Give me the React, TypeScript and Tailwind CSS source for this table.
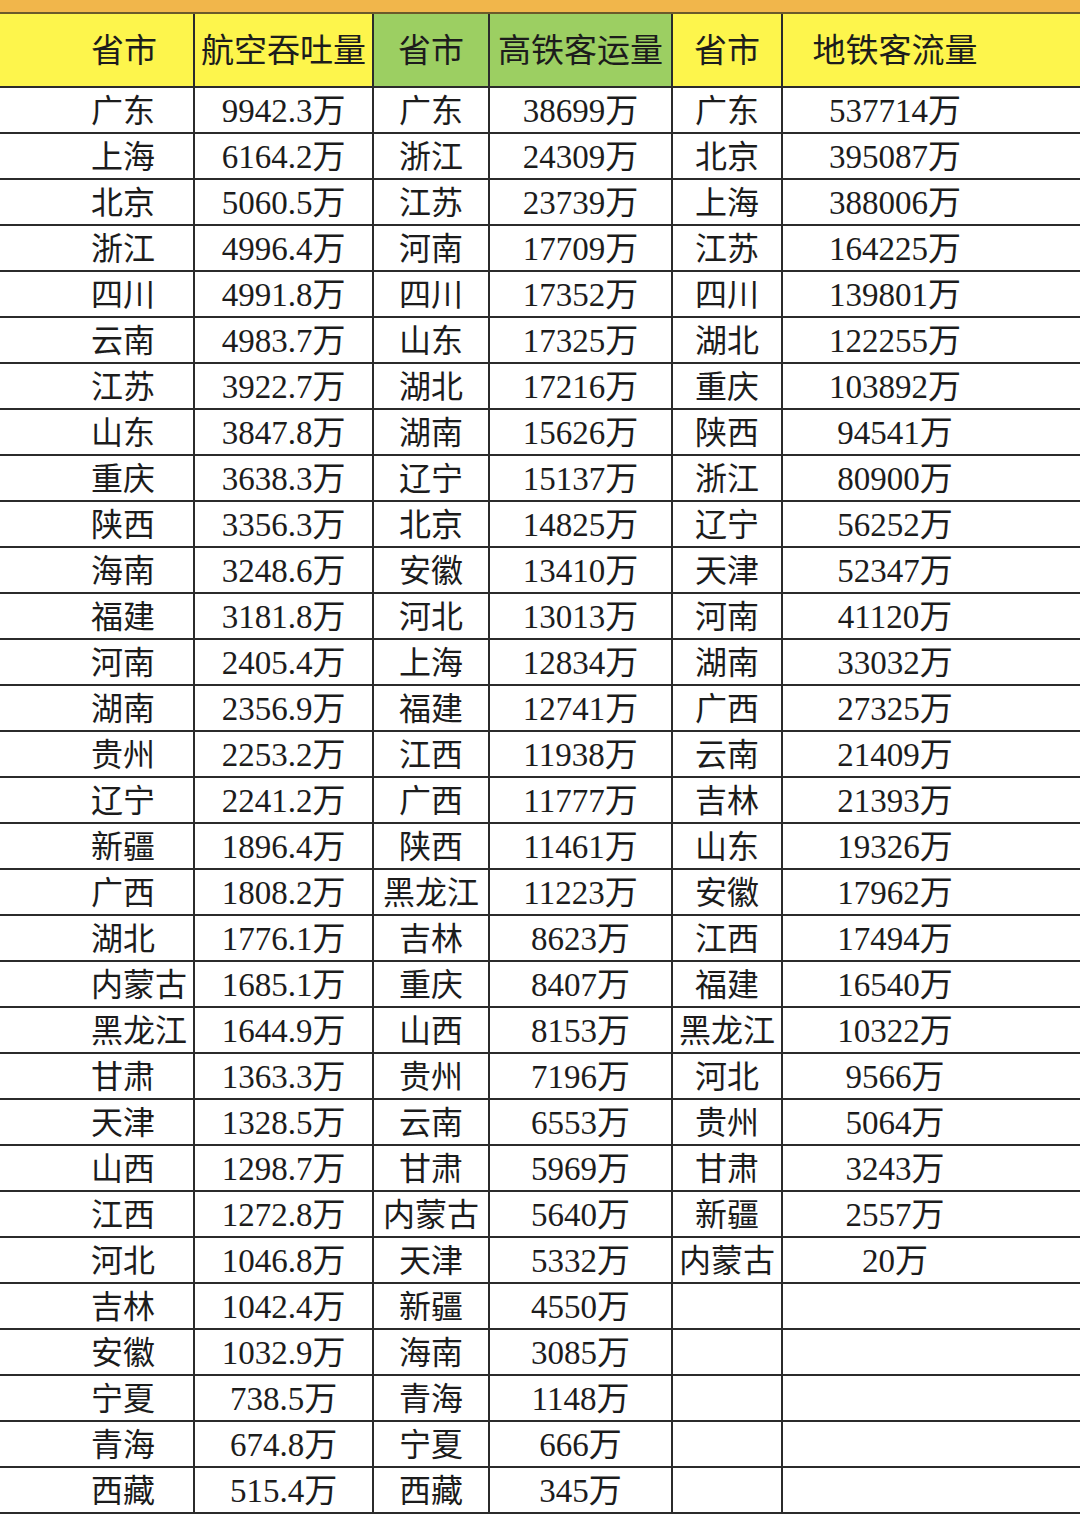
const AIR: [string, string][] = [
  ["广东", "9942.3"], ["上海", "6164.2"], ["北京", "5060.5"], ["浙江", "4996.4"],
  ["四川", "4991.8"], ["云南", "4983.7"], ["江苏", "3922.7"], ["山东", "3847.8"],
  ["重庆", "3638.3"], ["陕西", "3356.3"], ["海南", "3248.6"], ["福建", "3181.8"],
  ["河南", "2405.4"], ["湖南", "2356.9"], ["贵州", "2253.2"], ["辽宁", "2241.2"],
  ["新疆", "1896.4"], ["广西", "1808.2"], ["湖北", "1776.1"], ["内蒙古", "1685.1"],
  ["黑龙江", "1644.9"], ["甘肃", "1363.3"], ["天津", "1328.5"], ["山西", "1298.7"],
  ["江西", "1272.8"], ["河北", "1046.8"], ["吉林", "1042.4"], ["安徽", "1032.9"],
  ["宁夏", "738.5"], ["青海", "674.8"], ["西藏", "515.4"],
];

const RAIL: [string, string][] = [
  ["广东", "38699"], ["浙江", "24309"], ["江苏", "23739"], ["河南", "17709"],
  ["四川", "17352"], ["山东", "17325"], ["湖北", "17216"], ["湖南", "15626"],
  ["辽宁", "15137"], ["北京", "14825"], ["安徽", "13410"], ["河北", "13013"],
  ["上海", "12834"], ["福建", "12741"], ["江西", "11938"], ["广西", "11777"],
  ["陕西", "11461"], ["黑龙江", "11223"], ["吉林", "8623"], ["重庆", "8407"],
  ["山西", "8153"], ["贵州", "7196"], ["云南", "6553"], ["甘肃", "5969"],
  ["内蒙古", "5640"], ["天津", "5332"], ["新疆", "4550"], ["海南", "3085"],
  ["青海", "1148"], ["宁夏", "666"], ["西藏", "345"],
];

const METRO: [string, string][] = [
  ["广东", "537714"], ["北京", "395087"], ["上海", "388006"], ["江苏", "164225"],
  ["四川", "139801"], ["湖北", "122255"], ["重庆", "103892"], ["陕西", "94541"],
  ["浙江", "80900"], ["辽宁", "56252"], ["天津", "52347"], ["河南", "41120"],
  ["湖南", "33032"], ["广西", "27325"], ["云南", "21409"], ["吉林", "21393"],
  ["山东", "19326"], ["安徽", "17962"], ["江西", "17494"], ["福建", "16540"],
  ["黑龙江", "10322"], ["河北", "9566"], ["贵州", "5064"], ["甘肃", "3243"],
  ["新疆", "2557"], ["内蒙古", "20"],
];

const ROW =
  "grid grid-cols-[195px_179px_116px_183px_110px_297px] border-b-2 border-[#2b2b2b]";
const CELL = "flex items-center justify-center border-r-2 border-[#2b2b2b]";

export default function App() {
  return (
    <div
      className="w-[1080px] h-[1520px] overflow-hidden bg-white text-[#1c1c1c]"
      style={{ fontFamily: '"Liberation Serif", "Noto Sans CJK SC", serif' }}
    >
      <div className="h-[12px] bg-[#f1b64b]" />
      <div className="h-[2px] bg-[#6b5a2a]" />

      <div className={`${ROW} h-[74px] text-[33px] leading-none`}>
        <div className="flex items-center border-r-2 border-[#2b2b2b] bg-[#fdf54c] pl-[91px] pt-[3px]">
          省市
        </div>
        <div className={`${CELL} bg-[#fdf54c] pt-[3px]`}>航空吞吐量</div>
        <div className={`${CELL} bg-[#9ccf62] pt-[3px]`}>省市</div>
        <div className={`${CELL} bg-[#9ccf62] pt-[3px]`}>高铁客运量</div>
        <div className={`${CELL} bg-[#fdf54c] pt-[3px]`}>省市</div>
        <div className="flex items-center justify-center bg-[#fdf54c] pr-[73px] pt-[3px]">
          地铁客流量
        </div>
      </div>

      {AIR.map(([p1, v1], i) => {
        const [p2, v2] = RAIL[i];
        const metro = METRO[i];
        return (
          <div key={p1} className={`${ROW} h-[46px] text-[32px] leading-none`}>
            <div className="flex items-center border-r-2 border-[#2b2b2b] pl-[91px] pt-[2px]">
              {p1}
            </div>
            <div className={`${CELL} pt-[2px] text-[33px]`}>{v1}万</div>
            <div className={`${CELL} whitespace-nowrap pt-[2px]`}>{p2}</div>
            <div className={`${CELL} pt-[2px] text-[33px]`}>{v2}万</div>
            <div className={`${CELL} whitespace-nowrap pt-[2px]`}>
              {metro ? metro[0] : ""}
            </div>
            <div className="flex items-center justify-center pr-[73px] pt-[2px] text-[33px]">
              {metro ? `${metro[1]}万` : ""}
            </div>
          </div>
        );
      })}
    </div>
  );
}
